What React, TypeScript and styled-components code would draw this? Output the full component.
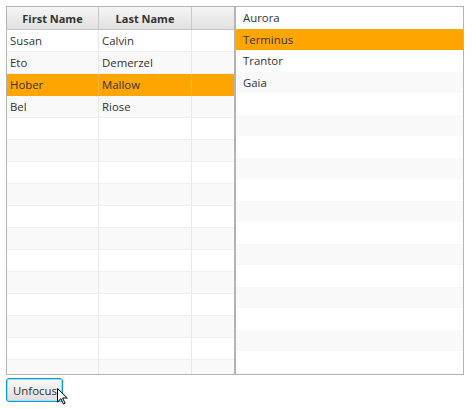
import React from "react";
import styled, { createGlobalStyle } from "styled-components";

const GlobalStyle = createGlobalStyle`
  * {
    box-sizing: border-box;
  }
  body {
    margin: 0;
    background: #ffffff;
    font-family: "Open Sans", "Noto Sans", "Liberation Sans", sans-serif;
    font-size: 11.4px;
    color: #333333;
  }
`;

const Page = styled.div`
  display: flex;
  flex-direction: column;
  align-items: flex-start;
  gap: 3px;
  padding: 6px;
`;

const Panes = styled.div`
  display: flex;
  height: 369px;
`;

const Table = styled.div`
  display: flex;
  flex-direction: column;
  width: 229px;
  height: 100%;
  border: 1px solid #b4b4b4;
  overflow: hidden;
`;

const HeaderRow = styled.div`
  display: grid;
  grid-template-columns: 92px 93px 1fr;
  flex: 0 0 23px;
  background: linear-gradient(#f5f5f5, #e1e1e1);
  border-bottom: 1px solid #c4c4c4;
`;

const HeaderCell = styled.div<{ $filler?: boolean }>`
  display: flex;
  align-items: center;
  justify-content: center;
  font-size: 11px;
  font-weight: 700;
  color: #333333;
  border-right: ${(p) => (p.$filler ? "none" : "1px solid #cacaca")};
`;

const Row = styled.div<{ $odd: boolean; $selected: boolean }>`
  display: grid;
  grid-template-columns: 92px 93px 1fr;
  flex: 0 0 22px;
  border-bottom: 1px solid
    ${(p) => (p.$selected ? "#ffa500" : "#f0f0f0")};
  background: ${(p) =>
    p.$selected ? "#ffa500" : p.$odd ? "#f9f9f9" : "#ffffff"};
`;

const Cell = styled.div<{ $filler?: boolean; $selected?: boolean }>`
  display: flex;
  align-items: center;
  padding: 0 3px;
  white-space: nowrap;
  border-right: ${(p) =>
    p.$filler ? "none" : p.$selected ? "1px solid #ffb53a" : "1px solid #e8e8e8"};
`;

const List = styled.div`
  display: flex;
  flex-direction: column;
  width: 229px;
  height: 100%;
  border: 1px solid #b4b4b4;
  overflow: hidden;
`;

const ListItem = styled.div<{ $odd: boolean; $selected: boolean }>`
  display: flex;
  align-items: center;
  flex: 0 0 21.5px;
  padding: 0 7px;
  background: ${(p) =>
    p.$selected ? "#ffa500" : p.$odd ? "#f9f9f9" : "#ffffff"};
`;

const ButtonWrap = styled.div`
  position: relative;
`;

const Button = styled.button`
  height: 24px;
  width: 57px;
  padding: 0 0 0 1px;
  font: inherit;
  color: #333333;
  border: 1px solid #039ed3;
  border-radius: 3px;
  box-shadow: inset 0 0 0 1px #a6d9ee;
  background: linear-gradient(#f9f9f9, #dedede);
`;

const Cursor = styled.svg`
  position: absolute;
  left: 51px;
  top: 10px;
  pointer-events: none;
`;

const people = [
  ["Susan", "Calvin"],
  ["Eto", "Demerzel"],
  ["Hober", "Mallow"],
  ["Bel", "Riose"],
];

const planets = ["Aurora", "Terminus", "Trantor", "Gaia"];

const App = () => {
  const tableRows = Array.from({ length: 16 }, (_, i) => people[i]);
  const listRows = Array.from({ length: 18 }, (_, i) => planets[i]);
  return (
    <>
      <GlobalStyle />
      <Page>
        <Panes>
          <Table>
            <HeaderRow>
              <HeaderCell>First Name</HeaderCell>
              <HeaderCell>Last Name</HeaderCell>
              <HeaderCell $filler />
            </HeaderRow>
            {tableRows.map((p, i) => (
              <Row key={i} $odd={i % 2 === 1} $selected={i === 2}>
                <Cell $selected={i === 2}>{p ? p[0] : ""}</Cell>
                <Cell $selected={i === 2}>{p ? p[1] : ""}</Cell>
                <Cell $filler />
              </Row>
            ))}
          </Table>
          <List>
            {listRows.map((name, i) => (
              <ListItem key={i} $odd={i % 2 === 1} $selected={i === 1}>
                {name ?? ""}
              </ListItem>
            ))}
          </List>
        </Panes>
        <ButtonWrap>
          <Button>Unfocus</Button>
          <Cursor width="12" height="17" viewBox="0 0 12 17">
            <path
              d="M0.5 0.5 L0.5 14 L3.9 10.7 L6.4 16 L8.1 15.2 L5.6 10 L10.3 10 Z"
              fill="#ffffff"
              stroke="#000000"
              strokeWidth="1"
              strokeLinejoin="round"
            />
          </Cursor>
        </ButtonWrap>
      </Page>
    </>
  );
};

export default App;
